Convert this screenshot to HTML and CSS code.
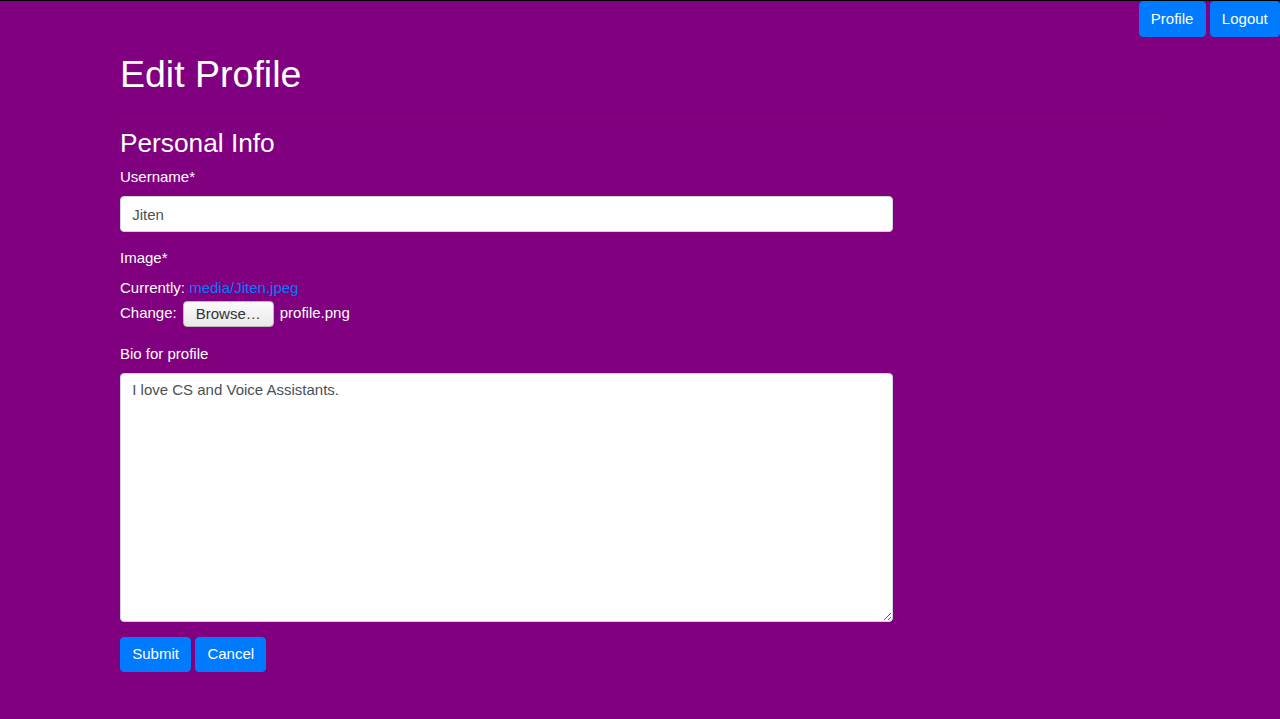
FILE: index.html
```html
<!DOCTYPE html>
<html lang="en">
<head>
<meta charset="utf-8">
<title>Edit Profile</title>
<link rel="stylesheet" href="styles.css">
</head>
<body>
<nav class="topnav">
  <a class="btn" href="#">Profile</a>
  <a class="btn" href="#">Logout</a>
</nav>
<main class="main">
  <h1 class="title">Edit Profile</h1>
  <div class="rule"></div>
  <form class="form">
    <h3 class="section">Personal Info</h3>
    <label class="label label-first">Username*</label>
    <input class="field" type="text" value="Jiten">
    <label class="label label-next">Image*</label>
    <div class="line current">Currently: <a class="link" href="#">media/Jiten.jpeg</a></div>
    <div class="line change">
      <span>Change:</span>
      <button type="button" class="browse">Browse…</button>
      <span>profile.png</span>
    </div>
    <label class="label label-next">Bio for profile</label>
    <textarea class="field area">I love CS and Voice Assistants.</textarea>
    <div class="actions">
      <button type="button" class="btn">Submit</button>
      <button type="button" class="btn">Cancel</button>
    </div>
  </form>
</main>
</body>
</html>
```
FILE: styles.css
```css
* { box-sizing: border-box; }
html, body { margin: 0; padding: 0; }
body {
  background: #800080;
  border-top: 1px solid #000;
  min-height: 719px;
  font-family: "Liberation Sans", Arial, sans-serif;
  font-size: 15px;
  line-height: 22.5px;
  color: #fff;
}
.topnav {
  display: flex;
  justify-content: flex-end;
  gap: 4px;
}
.btn {
  display: inline-block;
  height: 35.75px;
  padding: 5.625px 11.25px;
  border: 1px solid #007bff;
  border-radius: 4px;
  background: #007bff;
  color: #fff;
  font-family: inherit;
  font-size: 15px;
  line-height: 22.5px;
  text-decoration: none;
  cursor: pointer;
}
.main {
  padding: 0 120px;
  display: flex;
  flex-direction: column;
}
.title {
  margin: 15px 0 0;
  font-size: 37.5px;
  font-weight: 400;
  line-height: 45px;
}
.rule {
  margin-top: 15px;
  width: 1040px;
  height: 1px;
  background: rgba(0, 0, 0, 0.05);
}
.form {
  width: 773px;
  display: flex;
  flex-direction: column;
}
.section {
  margin: 15px 0 0;
  font-size: 26.25px;
  font-weight: 400;
  line-height: 31.5px;
}
.label { display: block; }
.label-first { margin-top: 7px; }
.label-next { margin-top: 15px; }
.field {
  display: block;
  width: 773px;
  height: 35.75px;
  margin-top: 7.5px;
  padding: 5.625px 11.25px;
  border: 1px solid #ced4da;
  border-radius: 4px;
  background: #fff;
  color: #495057;
  font-family: inherit;
  font-size: 15px;
  line-height: 22.5px;
}
.area {
  height: 249px;
  resize: vertical;
}
.line { height: 22.5px; }
.current { margin-top: 7.5px; }
.link { color: #007bff; text-decoration: none; }
.change {
  height: 28px;
  display: flex;
  align-items: center;
  gap: 6px;
}
.browse {
  width: 91px;
  height: 26px;
  padding: 0;
  border: 1px solid #b9b9b9;
  border-radius: 4px;
  background: linear-gradient(#fbfbfb, #e9e9e9);
  color: #333;
  font-family: inherit;
  font-size: 15px;
  line-height: 22px;
}
.actions {
  margin-top: 15px;
  display: flex;
  gap: 4px;
}
```
